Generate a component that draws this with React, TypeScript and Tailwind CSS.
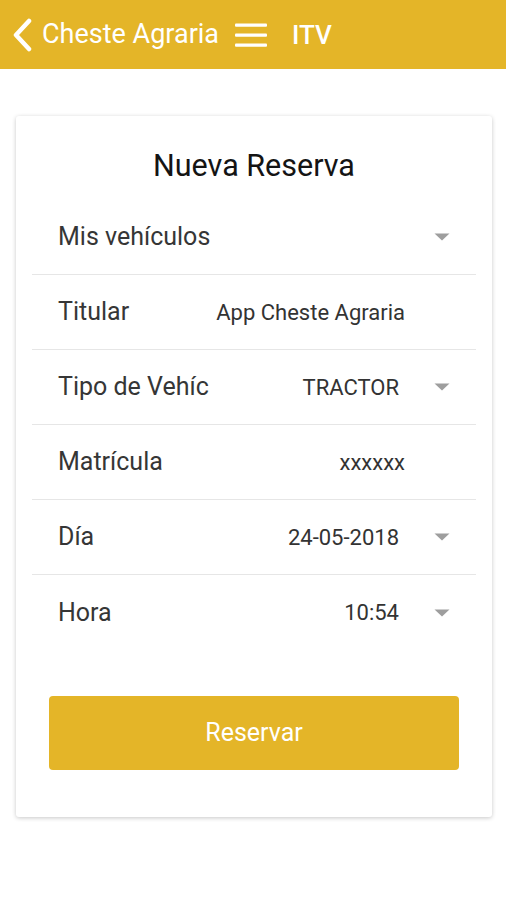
import { ReactNode } from "react";

const rows: { label: string; value?: string; arrow?: boolean }[] = [
  { label: "Mis vehículos", arrow: true },
  { label: "Titular", value: "App Cheste Agraria" },
  { label: "Tipo de Vehíc", value: "TRACTOR", arrow: true },
  { label: "Matrícula", value: "xxxxxx" },
  { label: "Día", value: "24-05-2018", arrow: true },
  { label: "Hora", value: "10:54", arrow: true },
];

function Caret() {
  return (
    <svg width="16" height="8" viewBox="0 0 16 8">
      <path d="M0.5 0.5 L15.5 0.5 L8 7.5 Z" fill="#9e9e9e" />
    </svg>
  );
}

function Row({ label, value, arrow, last }: { label: string; value?: string; arrow?: boolean; last?: boolean }) {
  return (
    <div className={`flex items-center h-[75px] pl-[26px] pr-[26px] ${last ? "" : "border-b border-[#e6e6e6]"}`}>
      <span className="flex-1 text-[25px] text-[#363636]">{label}</span>
      {value && (
        <span className={`text-[22px] text-[#333333] ${arrow ? "mr-[35px]" : "mr-[29px]"}`}>{value}</span>
      )}
      {arrow && <Caret />}
      {!arrow && <span className="w-[16px]" />}
    </div>
  );
}

function Header({ children }: { children?: ReactNode }) {
  return (
    <header className="h-[69px] bg-[#e4b528] flex items-center text-white">
      <svg width="24" height="34" viewBox="0 0 24 34" className="ml-[10px]">
        <path d="M19 3 L6 17 L19 31" stroke="white" strokeWidth="4.5" fill="none" strokeLinecap="round" strokeLinejoin="round" />
      </svg>
      <span className="ml-[8px] text-[27px] leading-none">Cheste Agraria</span>
      <svg width="34" height="24" viewBox="0 0 34 24" className="ml-[15px]">
        <rect x="1" y="0.5" width="32" height="3.2" rx="1" fill="white" />
        <rect x="1" y="10.5" width="32" height="3.2" rx="1" fill="white" />
        <rect x="1" y="20.5" width="32" height="3.2" rx="1" fill="white" />
      </svg>
      <span className="ml-[24px] text-[26px] font-medium leading-none">ITV</span>
      {children}
    </header>
  );
}

export default function App() {
  return (
    <div className="w-[506px] h-[900px] bg-white" style={{ fontFamily: "Roboto, 'Liberation Sans', sans-serif" }}>
      <Header />
      <main className="pl-[16px] pt-[47px]">
        <div className="w-[476px] bg-white rounded-[3px] shadow-[0_1px_4px_rgba(0,0,0,0.22)] px-4 pb-[47px]">
          <h1 className="h-[84px] pt-[35px] text-center text-[30.5px] font-normal text-[#141414] leading-none">Nueva Reserva</h1>
          {rows.map((r, i) => (
            <Row key={r.label} {...r} last={i === rows.length - 1} />
          ))}
          <button className="mt-[46px] mx-[17px] w-[410px] h-[74px] rounded-[4px] bg-[#e4b528] text-white text-[25px] font-normal">
            Reservar
          </button>
        </div>
      </main>
    </div>
  );
}
